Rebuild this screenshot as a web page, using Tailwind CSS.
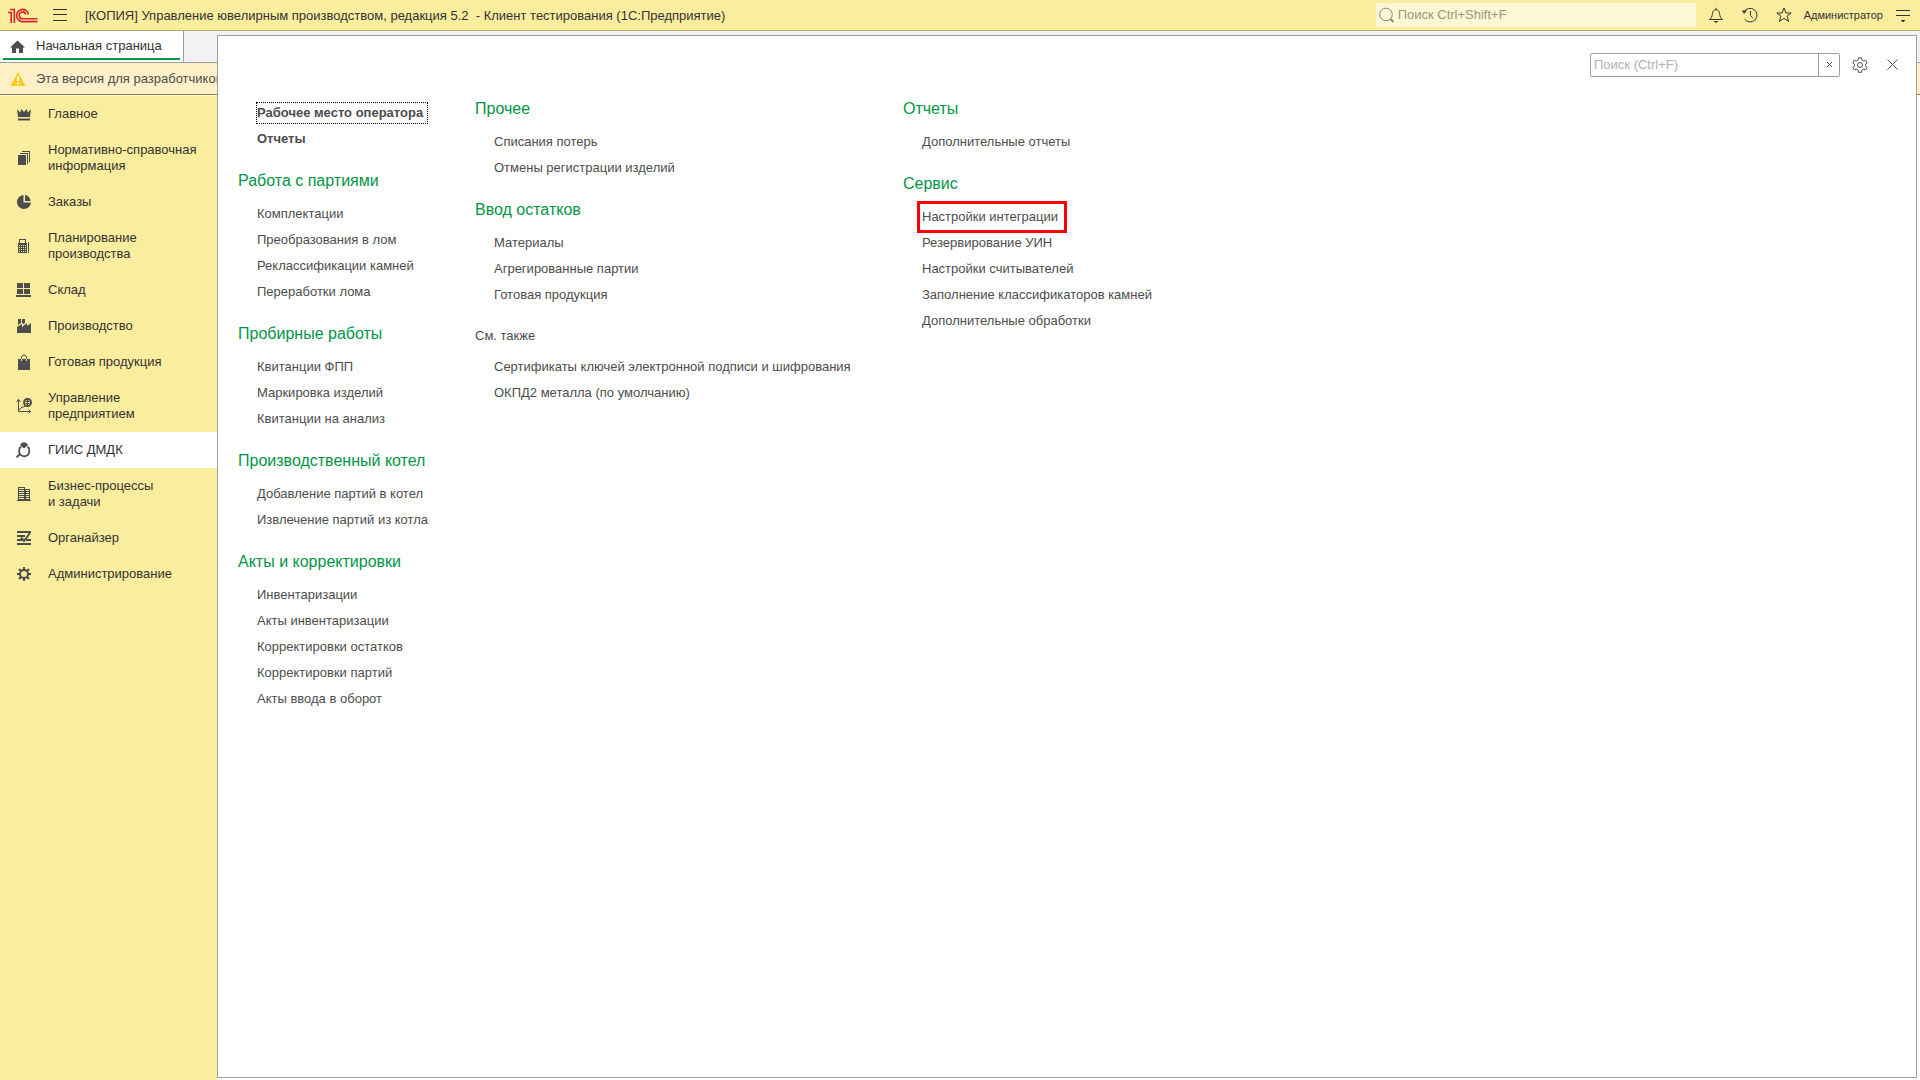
<!DOCTYPE html>
<html lang="ru">
<head>
<meta charset="utf-8">
<title>Управление ювелирным производством</title>
<script src="https://cdn.jsdelivr.net/npm/@tailwindcss/browser@4"></script>
</head>
<body class="flex h-screen flex-col overflow-hidden bg-white font-['Liberation_Sans',Arial,sans-serif] text-[13px] leading-4 text-[#333333]">
<header class="flex h-[31px] shrink-0 items-center border-b border-[#b0a96c] bg-[#fbed9e] pr-[9px] pl-2">
  <svg class="h-[15px] w-[30px]" viewBox="0 0 30 15" fill="none" stroke="#d9232b" stroke-width="1.6" aria-label="1С"><path d="M0 4.500H3.200V15M2 1.500H6.300V15M20.500 6.500A6 6.100 0 1 0 14.500 13.600H29.500M17.700 6.500A3.300 3.400 0 1 0 14.500 10.700H29.500"/></svg>
  <button class="ml-[15px] flex h-6 w-[14px] items-center" aria-label="Меню"><svg class="h-3 w-[14px]" viewBox="0 0 14 12" stroke="#333" shape-rendering="crispEdges"><path d="M0 .5h14M0 5.500h14M0 11.500h14"/></svg></button>
  <h1 class="ml-[18px] pt-px whitespace-pre">[КОПИЯ] Управление ювелирным производством, редакция 5.2  - Клиент тестирования (1С:Предприятие)</h1>
  <label class="ml-auto flex h-6 w-[320px] items-center gap-[3px] rounded-xs bg-[#fdf7d6] pl-[3px]">
    <svg class="h-4 w-4 shrink-0" viewBox="0 0 16 16" fill="none" stroke="#8d8970"><circle cx="7" cy="7.500" r="6.300"/><path stroke-width="2" d="M11.500 12l3 3"/></svg>
    <input class="w-full outline-none placeholder:text-[#9b977b]" placeholder="Поиск Ctrl+Shift+F" aria-label="Поиск по программе">
  </label>
  <button class="ml-3 h-4 w-4" aria-label="Уведомления"><svg viewBox="0 0 16 16" fill="none" stroke="#333"><path d="M1.500 12.500h13c-2-1.500-2.500-3-3-6-.3-2.500-1.500-3.800-3.500-3.800S4.800 4 4.500 6.500c-.5 3-1 4.500-3 6zM8 2.700V.8"/><path fill="#333" stroke="none" d="M5.500 14h5L8 16z"/></svg></button>
  <button class="ml-[18px] h-4 w-4" aria-label="История"><svg viewBox="0 0 16 16" fill="none" stroke="#333"><path d="M2.200 5A6.800 6.800 0 1 1 2.600 12M8.500 4v4.500L11 11.500"/><path fill="#333" stroke="none" d="M0 3.500h5L2 7z"/></svg></button>
  <button class="ml-[18px] h-4 w-4" aria-label="Избранное"><svg viewBox="0 0 16 16" fill="none" stroke="#333"><path d="M8 1l2 5h5.200l-4.200 3.200 1.700 5.300L8 11.300l-4.700 3.200L5 9.200.8 6H6z"/></svg></button>
  <button class="ml-3 text-[11px]">Администратор</button>
  <button class="ml-3 h-4 w-4" aria-label="Сервис и настройки"><svg viewBox="0 0 16 16" shape-rendering="crispEdges"><path fill="#333" d="M1 3h14v1H1zM1 8h14v1H1zM5 13h5L7.500 15.500z"/></svg></button>
</header>

<div class="relative flex min-h-0 flex-1 flex-col">
  <nav class="flex h-8 shrink-0 border-b border-[#a0a0a0] bg-[#f2f2f2]" aria-label="Открытые окна">
    <a href="#" class="flex w-[184px] border-r border-[#a0a0a0] bg-white pr-[3px] pb-[2px] pl-[3px]">
      <span class="flex flex-1 items-center gap-[11px] border-b-2 border-[#009646] pt-[3px] pl-[7px]">
        <svg class="h-[15px] w-[15px]" viewBox="0 0 15 15" fill="#4d4d4d"><path d="M7.500 1.500L0 8.500h2V14h4V9.500h3V14h4V8.500h2z"/></svg>Начальная страница</span>
    </a>
  </nav>
  <div class="flex h-8 shrink-0 items-center gap-[10px] border-b border-[#a27d13] bg-[#fff0c8] pl-[10px] text-[#4d4d4d]">
    <svg class="h-[14px] w-4" viewBox="0 0 16 14"><path fill="#fbcb1e" d="M8 0l7.500 14H.5z"/><path fill="#fff" d="M7 4.500h2V9H7zM7 10.500h2v2H7z"/></svg>
    <span class="whitespace-nowrap">Эта версия для разработчиков</span>
  </div>
  <nav class="mt-px w-[217px] flex-1 bg-[#fbed9e]" aria-label="Разделы">
    <a href="#" class="flex items-center gap-4 py-[10px] pl-4"><svg class="h-4 w-4" viewBox="0 0 16 16" fill="#4d4d4d"><path d="M1 3l3 3.500L5.500 3l2.500 3 2.500-3L12 6.500 15 3l-1 8H2zM2 12.500h12v2H2z"/></svg>Главное</a>
    <a href="#" class="flex items-center gap-4 py-[10px] pl-4"><svg class="h-4 w-4" viewBox="0 0 16 16" fill="#4d4d4d" shape-rendering="crispEdges"><path d="M2 5h8v10H2zM4 3h8v11h-1V4H4zM6 1h8v11h-1V2H6z"/></svg><span>Нормативно-справочная<br>информация</span></a>
    <a href="#" class="flex items-center gap-4 py-[10px] pl-4"><svg class="h-4 w-4" viewBox="0 0 16 16" fill="#4d4d4d"><path d="M7.500 1v7.500H15A7 7 0 1 1 7.500 1zM9 1a6 6 0 0 1 5.500 6H9z"/></svg>Заказы</a>
    <a href="#" class="flex items-center gap-4 py-[10px] pl-4"><svg class="h-4 w-4" viewBox="0 0 16 16" fill="#4d4d4d" shape-rendering="crispEdges"><path fill-rule="evenodd" d="M3 1h7v4h1v10H2V5h1zM4 2v3h5V2zM3 7v1h1V7zm2 0v1h1V7zm2 0v1h1V7zm2 0v1h1V7zM3 9v1h1V9zm2 0v1h1V9zm2 0v1h1V9zm2 0v1h1V9zM3 11v1h1v-1zm2 0v1h1v-1zm2 0v1h1v-1zm2 0v1h1v-1zM3 13v1h1v-1zm2 0v1h1v-1zm2 0v1h1v-1zm2 0v1h1v-1zM12 4h1v11h-1z"/></svg><span>Планирование<br>производства</span></a>
    <a href="#" class="flex items-center gap-4 py-[10px] pl-4"><svg class="h-4 w-4" viewBox="0 0 16 16" fill="#4d4d4d" shape-rendering="crispEdges"><path d="M1 1h6v5H1zM8 1h6v5H8zM1 7h6v5H1zM8 7h6v5H8zM0 13h15v2H0z"/></svg>Склад</a>
    <a href="#" class="flex items-center gap-4 py-[10px] pl-4"><svg class="h-4 w-4" viewBox="0 0 16 16" fill="#4d4d4d"><path d="M1 15V9l5-3v3l5-4v3l4-3v10zM2 1h3v4L2 7zM6 1h3v4L7 6l-1-1z"/></svg>Производство</a>
    <a href="#" class="flex items-center gap-4 py-[10px] pl-4"><svg class="h-4 w-4" viewBox="0 0 16 16" fill="#4d4d4d"><path d="M2 5h3v2h1V5h4v2h1V5h3v11H2z"/><path fill="none" stroke="#4d4d4d" d="M5.500 5V3.500a2.500 2.500 0 0 1 5 0V5"/></svg>Готовая продукция</a>
    <a href="#" class="flex items-center gap-4 py-[10px] pl-4"><svg class="h-4 w-4" viewBox="0 0 16 16" fill="none" stroke="#4d4d4d"><path d="M2.500 1v12.500H15M.5 4l2-2.500 2 2.500M12.500 11.500l2 2-2 2M3 12l3-3h2l2-2"/><circle cx="11.500" cy="4.500" r="3.500" stroke-width="2"/><path d="M11.500 2v5M9.500 3.500h4M9.500 5.500h4"/></svg><span>Управление<br>предприятием</span></a>
    <a href="#" aria-current="page" class="flex items-center gap-4 bg-white py-[10px] pl-4"><svg class="h-4 w-4" viewBox="0 0 16 16" fill="none" stroke="#4d4d4d" stroke-width="1.800"><path d="M5 4.500C2.500 6.500 2.500 12 5 13.300c2 1.200 4.500 1.200 6.500 0 2.500-1.800 2.500-6.800 0-8.800M4 12l-3.500 3.300"/><path fill="#4d4d4d" stroke="none" d="M6 .5h4L12 3 8 6.500 4 3z"/></svg>ГИИС ДМДК</a>
    <a href="#" class="flex items-center gap-4 py-[10px] pl-4"><svg class="h-4 w-4" viewBox="0 0 16 16" fill="#4d4d4d" shape-rendering="crispEdges"><path fill-rule="evenodd" d="M2 1h7v2h5v11h1v1H1v-1h1zM3 2v1h5V2zm0 2v1h5V4zm0 2v1h5V6zm0 2v1h5V8zm0 2v1h5v-1zm0 2v1h5v-1zM10 4v1h3V4zm0 2v1h3V6zm0 2v1h3V8zm0 2v1h3v-1zm0 2v1h3v-1z"/></svg><span>Бизнес-процессы<br>и задачи</span></a>
    <a href="#" class="flex items-center gap-4 py-[10px] pl-4"><svg class="h-4 w-4" viewBox="0 0 16 16" fill="none" stroke="#4d4d4d" stroke-width="2"><path d="M1 2h14M1 6h8M1 10h5M10 10h5M1 14h14M5 7.500l3 3.500 6-8"/></svg>Органайзер</a>
    <a href="#" class="flex items-center gap-4 py-[10px] pl-4"><svg class="h-4 w-4" viewBox="0 0 16 16" fill="none" stroke="#4d4d4d" stroke-width="2"><circle cx="8" cy="8" r="4"/><path d="M8 1v3M8 12v3M1 8h3M12 8h3M3 3l2 2M11 11l2 2M13 3l-2 2M5 11l-2 2"/></svg>Администрирование</a>
  </nav>

  <main class="absolute top-1 right-[3px] bottom-[2px] left-[217px] border border-[#a0a0a0] bg-white text-[#4d4d4d]">
    <div class="flex h-[53px] items-center justify-end pt-1 pr-[18px]">
      <div class="flex h-6 w-[250px] rounded-xs border border-[#a0a0a0]">
        <input class="min-w-0 flex-1 px-[3px] outline-none placeholder:text-[#b0b0b0]" placeholder="Поиск (Ctrl+F)" aria-label="Поиск (Ctrl+F)">
        <button class="flex w-[21px] items-center justify-center border-l border-[#a0a0a0]" aria-label="Очистить"><svg class="h-[5px] w-[5px]" viewBox="0 0 5 5" stroke="#4d4d4d"><path d="M0 0l5 5M5 0L0 5"/></svg></button>
      </div>
      <button class="ml-3 h-4 w-4" aria-label="Настройки"><svg viewBox="0 0 16 16" fill="none" stroke="#4d4d4d"><circle cx="8" cy="8" r="2.500"/><path d="M6.500.8h3l.4 2.200 1.700 1 2.100-.8 1.500 2.600L13.500 7.200v1.700l1.700 1.400-1.500 2.600-2.100-.8-1.700 1-.4 2.200h-3l-.4-2.200-1.700-1-2.100.8L.8 10.300l1.700-1.400V7.200L.8 5.800l1.500-2.600 2.100.8 1.700-1z"/></svg></button>
      <button class="ml-[19px] flex h-4 w-[11px] items-center" aria-label="Закрыть"><svg class="h-[11px] w-[11px]" viewBox="0 0 11 11" stroke="#4d4d4d"><path d="M.5.5l10 10M10.500.5l-10 10"/></svg></button>
    </div>
    <div class="grid grid-cols-[237px_428px_auto] pl-5 leading-[26px] [&_h2]:text-base [&_h2]:leading-10 [&_h2]:text-[#009646] [&_ul]:mb-[9px] [&_ul]:pl-[19px]">
      <section class="pt-[11px]">
        <ul class="font-bold">
          <li><a href="#" class="-m-px border border-dotted border-black pt-[2px] pr-1 pb-[3px]">Рабочее место оператора</a></li>
          <li><a href="#">Отчеты</a></li>
        </ul>
        <h2>Работа с партиями</h2>
        <ul>
          <li><a href="#">Комплектации</a></li>
          <li><a href="#">Преобразования в лом</a></li>
          <li><a href="#">Реклассификации камней</a></li>
          <li><a href="#">Переработки лома</a></li>
        </ul>
        <h2>Пробирные работы</h2>
        <ul>
          <li><a href="#">Квитанции ФПП</a></li>
          <li><a href="#">Маркировка изделий</a></li>
          <li><a href="#">Квитанции на анализ</a></li>
        </ul>
        <h2>Производственный котел</h2>
        <ul>
          <li><a href="#">Добавление партий в котел</a></li>
          <li><a href="#">Извлечение партий из котла</a></li>
        </ul>
        <h2>Акты и корректировки</h2>
        <ul>
          <li><a href="#">Инвентаризации</a></li>
          <li><a href="#">Акты инвентаризации</a></li>
          <li><a href="#">Корректировки остатков</a></li>
          <li><a href="#">Корректировки партий</a></li>
          <li><a href="#">Акты ввода в оборот</a></li>
        </ul>
      </section>
      <section>
        <h2>Прочее</h2>
        <ul>
          <li><a href="#">Списания потерь</a></li>
          <li><a href="#">Отмены регистрации изделий</a></li>
        </ul>
        <h2>Ввод остатков</h2>
        <ul>
          <li><a href="#">Материалы</a></li>
          <li><a href="#">Агрегированные партии</a></li>
          <li><a href="#">Готовая продукция</a></li>
        </ul>
        <h3 class="leading-[37px]">См. также</h3>
        <ul>
          <li><a href="#">Сертификаты ключей электронной подписи и шифрования</a></li>
          <li><a href="#">ОКПД2 металла (по умолчанию)</a></li>
        </ul>
      </section>
      <section>
        <h2>Отчеты</h2>
        <ul>
          <li><a href="#">Дополнительные отчеты</a></li>
        </ul>
        <h2>Сервис</h2>
        <ul>
          <li><a href="#" class="-m-[5px] border-3 border-[#ff0000] pt-[5px] pr-[6px] pb-[6px] pl-[2px]">Настройки интеграции</a></li>
          <li><a href="#">Резервирование УИН</a></li>
          <li><a href="#">Настройки считывателей</a></li>
          <li><a href="#">Заполнение классификаторов камней</a></li>
          <li><a href="#">Дополнительные обработки</a></li>
        </ul>
      </section>
    </div>
  </main>
</div>
</body>
</html>
